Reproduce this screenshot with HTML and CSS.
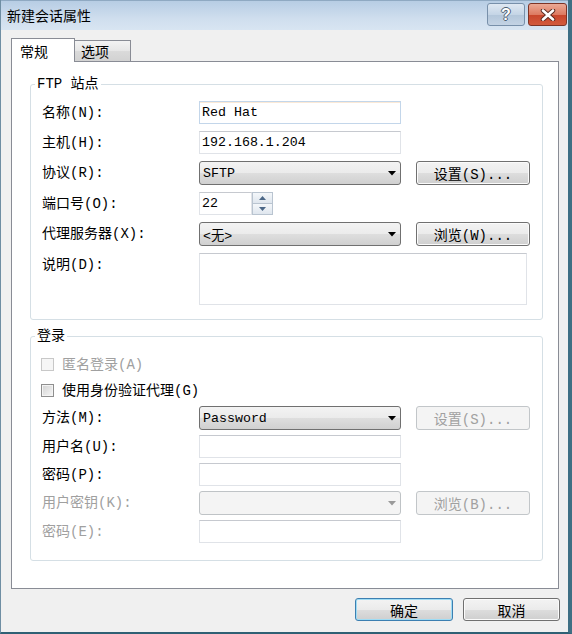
FILE: index.html
```html
<!DOCTYPE html>
<html lang="zh-CN">
<head>
    <meta charset="UTF-8">
    <meta name="viewport" content="width=device-width, initial-scale=1.0">
    <title>新建会话属性</title>
    <link rel="stylesheet" href="styles.css">
</head>
<body>
    <div class="window">
        <div class="titlebar">
            <span class="title">新建会话属性</span>
            <div class="caption-buttons">
                <span class="cap-btn help">?</span>
                <span class="cap-btn close">
                    <svg width="16" height="12" viewBox="0 0 16 12">
                        <path d="M3 1.5L13 10.5M13 1.5L3 10.5" stroke="#5a2a20" stroke-width="4.5" stroke-linecap="round"/>
                        <path d="M3 1.5L13 10.5M13 1.5L3 10.5" stroke="#fff" stroke-width="2.6" stroke-linecap="round"/>
                    </svg>
                </span>
            </div>
        </div>

        <div class="tabs">
            <span class="tab active">常规</span>
            <span class="tab">选项</span>
        </div>

        <div class="panel">
            <fieldset class="group">
                <legend>FTP 站点</legend>
                <div class="grid ftp-grid">
                    <label>名称(N):</label>
                    <input type="text" class="text-box hover" value="Red Hat">

                    <label>主机(H):</label>
                    <input type="text" class="text-box" value="192.168.1.204">

                    <label>协议(R):</label>
                    <div class="combo"><span>SFTP</span><svg class="arrow" width="8" height="5" viewBox="0 0 8 5"><path d="M0 0H8L4 4.5Z"/></svg></div>
                    <button class="btn">设置(S)...</button>

                    <label>端口号(O):</label>
                    <div class="spin">
                        <input type="text" class="text-box" value="22">
                        <div class="spin-buttons">
                            <span class="spin-btn"><svg width="7" height="4" viewBox="0 0 7 4"><path d="M0 4H7L3.5 0Z"/></svg></span>
                            <span class="spin-btn"><svg width="7" height="4" viewBox="0 0 7 4"><path d="M0 0H7L3.5 4Z"/></svg></span>
                        </div>
                    </div>

                    <label>代理服务器(X):</label>
                    <div class="combo"><span>&lt;无&gt;</span><svg class="arrow" width="8" height="5" viewBox="0 0 8 5"><path d="M0 0H8L4 4.5Z"/></svg></div>
                    <button class="btn">浏览(W)...</button>

                    <label class="top-label">说明(D):</label>
                    <textarea class="text-box memo"></textarea>
                </div>
            </fieldset>

            <fieldset class="group login">
                <legend>登录</legend>
                <div class="grid login-grid">
                    <div class="check disabled"><span class="box"></span>匿名登录(A)</div>
                    <div class="check"><span class="box"></span>使用身份验证代理(G)</div>

                    <label>方法(M):</label>
                    <div class="combo"><span>Password</span><svg class="arrow" width="8" height="5" viewBox="0 0 8 5"><path d="M0 0H8L4 4.5Z"/></svg></div>
                    <button class="btn" disabled>设置(S)...</button>

                    <label>用户名(U):</label>
                    <input type="text" class="text-box" value="">

                    <label>密码(P):</label>
                    <input type="password" class="text-box" value="">

                    <label class="disabled">用户密钥(K):</label>
                    <div class="combo disabled"><span></span><svg class="arrow" width="8" height="5" viewBox="0 0 8 5"><path d="M0 0H8L4 4.5Z"/></svg></div>
                    <button class="btn" disabled>浏览(B)...</button>

                    <label class="disabled">密码(E):</label>
                    <input type="password" class="text-box" value="" disabled>
                </div>
            </fieldset>
        </div>

        <div class="footer">
            <button class="btn default ok">确定</button>
            <button class="btn cancel">取消</button>
        </div>
    </div>
</body>
</html>
```

FILE: styles.css
```css
* {
    box-sizing: border-box;
}
body {
    margin: 0;
    font-family: "Liberation Mono", "Noto Sans CJK SC", monospace;
    font-size: 14px;
    color: #000;
    background: #fff;
}
.window {
    width: 572px;
    height: 634px;
    background: #f0f0f0;
    border-left: 1px solid #6f8ea3;
    border-right: 4px solid #3f6f84;
    border-bottom: 2px solid #2f6074;
    display: flex;
    flex-direction: column;
}

/* barra de titulo */
.titlebar {
    height: 30px;
    flex-shrink: 0;
    display: flex;
    justify-content: space-between;
    background: linear-gradient(#b7cde4, #cfdeee 60%, #d8e5f2);
    border-top: 1px solid #8fa9c2;
}
.title {
    font-family: "Noto Sans CJK SC", sans-serif;
    font-size: 14px;
    line-height: 28px;
    padding-left: 6px;
}
.caption-buttons {
    display: flex;
    gap: 3px;
    margin-top: 2px;
    margin-right: 1px;
}
.cap-btn {
    height: 23px;
    border-radius: 3px;
    display: flex;
    align-items: center;
    justify-content: center;
}
.help {
    width: 38px;
    border: 1px solid #7890aa;
    background: linear-gradient(#dfe8f2, #c5d5e6 50%, #b3c6da 51%, #c3d3e4);
    color: #fff;
    font-family: "Liberation Sans", sans-serif;
    font-weight: bold;
    font-size: 16px;
    text-shadow: 1px 0 0 #4d5f72, -1px 0 0 #4d5f72, 0 1px 0 #4d5f72, 0 -1px 0 #4d5f72;
}
.close {
    width: 39px;
    border: 1px solid #7d3426;
    background: linear-gradient(#eba995, #dd7b62 50%, #c8452b 51%, #d25a3c);
}

/* pestañas */
.tabs {
    height: 31px;
    flex-shrink: 0;
    display: flex;
    align-items: flex-end;
    padding-left: 10px;
}
.tab {
    font-family: "Noto Sans CJK SC", sans-serif;
    font-size: 14px;
    height: 21px;
    width: 57px;
    margin-left: -1px;
    padding-left: 6px;
    display: flex;
    align-items: center;
    border: 1px solid #898c95;
    border-bottom: none;
    background: linear-gradient(#f3f3f3, #e6e6e6 50%, #dadada 51%, #d2d2d2);
}
.tab.active {
    height: 24px;
    width: 64px;
    margin-left: 0;
    margin-bottom: -1px;
    padding-left: 8px;
    background: #fff;
    position: relative;
    z-index: 1;
}
.panel {
    margin-left: 10px;
    width: 548px;
    height: 528px;
    flex-shrink: 0;
    background: #fff;
    border: 1px solid #898c95;
    padding: 13px 15px 0 18px;
}

/* grupos */
.group {
    margin: 0;
    padding: 8px 11px 14px 11px;
    border: 1px solid #d5dfe5;
    border-radius: 3px;
    min-width: 0;
}
.group legend {
    padding: 0 2px;
    margin-left: -7px;
    line-height: 18px;
}
.group.login {
    margin-top: 7px;
    padding-top: 9px;
    padding-bottom: 17px;
}
.grid {
    display: grid;
    grid-template-columns: 142px 202px 114px;
    column-gap: 15px;
    align-items: center;
}
.ftp-grid {
    grid-template-rows: 23px 23px 24px 23px 24px 52px;
    row-gap: 7px;
}
.login-grid {
    grid-template-rows: 21px 21px 24px 23px 23px 24px 23px;
    row-gap: 5px;
}
.grid label {
    grid-column: 1;
    line-height: 18px;
    white-space: nowrap;
}
.grid .top-label {
    align-self: start;
    padding-top: 3px;
}
.disabled {
    color: #a0a0a0;
}

/* controles */
.text-box {
    grid-column: 2;
    height: 23px;
    width: 202px;
    margin: 0;
    padding: 0 2px;
    font-family: "Liberation Mono", "Noto Sans CJK SC", monospace;
    font-size: 13.3px;
    color: #000;
    background: #fff;
    border: 1px solid #e0e3e8;
    border-top-color: #c6c9cf;
    outline: none;
}
.text-box.hover {
    border-color: #c3d6ea;
    box-shadow: inset 0 1px 0 #fbe9d6;
}
.memo {
    grid-column: 2 / 4;
    width: 328px;
    height: 52px;
    resize: none;
}
.combo {
    grid-column: 2;
    height: 24px;
    display: flex;
    align-items: center;
    justify-content: space-between;
    padding: 0 3px 0 3px;
    font-size: 13.3px;
    border: 1px solid #707070;
    border-radius: 3px;
    background: linear-gradient(#f3f3f3, #ebebeb 50%, #dedede 51%, #d0d0d0);
}
.combo .arrow {
    margin-right: 1px;
    fill: #000;
}
.combo.disabled {
    border-color: #bfc3c6;
    background: #f4f4f4;
}
.combo.disabled .arrow {
    fill: #9a9a9a;
}
.btn {
    height: 24px;
    margin: 0;
    padding: 0;
    font-family: "Liberation Mono", "Noto Sans CJK SC", monospace;
    font-size: 14px;
    color: #000;
    border: 1px solid #707070;
    border-radius: 3px;
    background: linear-gradient(#f3f3f3, #ebebeb 50%, #dddddd 51%, #cfcfcf);
    box-shadow: inset 0 0 0 1px #fbfbfb;
}
.grid .btn {
    grid-column: 3;
}
.btn:disabled {
    color: #a0a0a0;
    border-color: #c2c6c9;
    background: #f4f4f4;
    box-shadow: none;
}
.spin {
    grid-column: 2;
    display: flex;
    width: 74px;
    height: 23px;
}
.spin .text-box {
    width: 53px;
}
.spin-buttons {
    width: 21px;
    display: flex;
    flex-direction: column;
}
.spin-btn {
    height: 11.5px;
    display: flex;
    align-items: center;
    justify-content: center;
    border: 1px solid #b9c4d0;
    background: linear-gradient(#f4f7fa, #dfe6ee);
    fill: #4b6787;
}
.spin-btn + .spin-btn {
    border-top: none;
}

/* casillas */
.check {
    grid-column: 1 / 4;
    display: flex;
    align-items: center;
    line-height: 18px;
}
.check .box {
    width: 13px;
    height: 13px;
    margin-left: -1px;
    margin-right: 8px;
    border: 1px solid #8f8f8f;
    background: linear-gradient(135deg, #d2d2d2, #f6f6f6);
    box-shadow: inset 0 0 0 1px #f4f4f4;
}
.check.disabled .box {
    border-color: #c8c8c8;
    background: #f6f6f6;
    box-shadow: none;
}

/* botones inferiores */
.footer {
    display: flex;
    justify-content: flex-end;
    gap: 10px;
    padding: 9px 8px 0 0;
}
.footer .btn {
    height: 23px;
    font-family: "Noto Sans CJK SC", sans-serif;
}
.ok {
    width: 98px;
    border-color: #3c7fb1;
    box-shadow: inset 0 0 0 1px #9fdcf4;
}
.cancel {
    width: 97px;
}
```
